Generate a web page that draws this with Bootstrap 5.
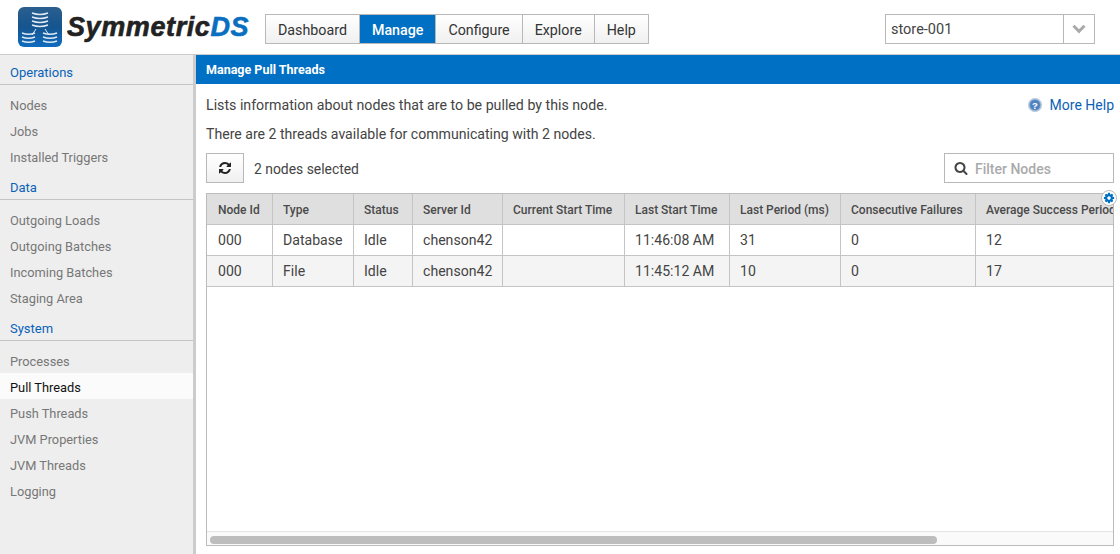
<!DOCTYPE html>
<html lang="en">
<head>
  <meta charset="UTF-8" />
  <meta name="viewport" content="width=device-width, initial-scale=1.0" />
  <title>SymmetricDS</title>
  <link href="https://cdn.jsdelivr.net/npm/bootstrap@5.3.0/dist/css/bootstrap.min.css" rel="stylesheet" />
  <style>
    html, body { height: 100%; overflow: hidden; }
    body { font-family: Roboto, "Liberation Sans", sans-serif; font-size: 14px; color: #444; background: #fff; }

    .sd-head { height: 55px; padding: 7px 25px 0 18px; border-bottom: 1px solid #ccc; flex: none; }
    .sd-logo-text { font-family: "Liberation Sans", Arial, sans-serif; font-weight: 700; font-style: italic; font-size: 27px; line-height: 41px; color: #222; letter-spacing: .6px; -webkit-text-stroke: .6px currentColor; margin-left: 5px; width: 198px; white-space: nowrap; }
    .sd-logo-text span { color: #0a6fc0; }

    .sd-menu { margin: 7px 0 0 0; height: 30px; }
    .sd-menu .btn { font-size: 14.25px; line-height: 28px; padding: 1px 12px 0; border: 1px solid #b8b8b8; border-radius: 0; color: #333; background: linear-gradient(#fff, #f0f0f0); }
    .sd-menu .btn.active { background: #0070c4; color: #fff; font-weight: 500; border-color: #b8b8b8; }

    .sd-store { width: 210px; height: 30px; margin-top: 7px; }
    .sd-store .form-control { font-size: 14.5px; color: #444; border: 1px solid #b8b8b8; border-radius: 0; padding: 1px 5px 0; height: 30px; }
    .sd-store .input-group-text { width: 32px; padding: 0; justify-content: center; background: #fff; border: 1px solid #b8b8b8; border-radius: 0; }

    .sd-side { width: 196px; flex: none; background: #eee; border-right: 3px solid #ccc; box-shadow: inset -1px 0 0 #eee; }
    .sd-section { height: 30px; padding: 9px 0 0 10px; margin-bottom: 7px; line-height: 17px; font-size: 13px; color: #0a62b8; border-bottom: 1px solid #c4c4c4; }
    .sd-item { height: 26px; line-height: 27px; padding: 0 0 0 10px; font-size: 12.8px; color: #777; }
    .sd-item.active { background: #fbfbfb; color: #111; margin-top: -1px; margin-bottom: 1px; line-height: 29px; }

    .sd-main { min-width: 0; }
    .sd-title { height: 29px; line-height: 29px; flex: none; padding-left: 10px; background: #0070c4; color: #fff; font-size: 12.5px; font-weight: 700; }
    .sd-body { padding: 0 6px 8px 10px; min-height: 0; }
    .sd-line { line-height: 20px; font-size: 14.2px; color: #444; }
    .sd-line-b { line-height: 20px; font-size: 14.1px; color: #444; }
    .sd-count { line-height: 20px; font-size: 13.9px; color: #444; margin-left: 10px; padding-top: 2px; }
    .sd-first { margin-top: 11px; }
    .sd-next { margin-top: 9px; }
    .sd-help { color: #0a62b8; font-size: 14px; text-decoration: none; }

    .sd-refresh { width: 38px; height: 30px; padding: 0; border: 1px solid #b8b8b8; border-radius: 0; background: linear-gradient(#fff, #f0f0f0); }
    .sd-filter { width: 170px; height: 30px; }
    .sd-filter .input-group-text { width: 31px; padding: 0 0 0 2px; justify-content: center; background: #fff; border: 1px solid #b8b8b8; border-right: 0; border-radius: 0; }
    .sd-filter .form-control { font-size: 14px; font-weight: 500; padding: 2px 0 0 1px; border: 1px solid #b8b8b8; border-left: 0; border-radius: 0; height: 30px; box-shadow: none; }
    .sd-filter .form-control::placeholder { color: #aaa; }

    .sd-grid { border: 1px solid #bbb; margin-top: 10px; min-height: 0; overflow: hidden; }
    .sd-grid-wrap { min-height: 0; }
    .sd-table { table-layout: fixed; width: 939px; margin: 0; border-collapse: separate; border-spacing: 0; }
    .sd-table th, .sd-table td { height: 31px; padding: 2px 0 0 10px; vertical-align: middle; border: 0; border-right: 1px solid #c4c4c4; border-bottom: 1px solid #c4c4c4; white-space: nowrap; overflow: hidden; box-shadow: none; color: #444; }
    .sd-table th:first-child, .sd-table td:first-child { padding-left: 11px; }
    .sd-table th { background: #dfdfdf; font-size: 12px; font-weight: 500; color: #4a4a4a; }
    .sd-table td { font-size: 14.1px; background: #fff; }
    .sd-table tr.sd-alt td { background: #f4f4f4; }
    .sd-scroll { height: 14px; flex: none; padding: 4px 3px 1px; background: #fafafa; border-top: 1px solid #e4e4e4; }
    .sd-thumb { height: 8px; width: 727px; background: #bdbdbd; border-radius: 4px; }

    .sd-gear { position: absolute; top: 7px; right: -3px; width: 16px; height: 16px; background: #fff; border: 1px solid #bbb; border-radius: 50%; }
  </style>
</head>
<body>
<div class="d-flex flex-column vh-100">

  <div class="sd-head d-flex">
    <svg width="44" height="40" viewBox="0 0 44 40">
      <defs>
        <linearGradient id="logoBg" x1="0" y1="0" x2="0" y2="1">
          <stop offset="0" stop-color="#2b5f8e"/>
          <stop offset=".5" stop-color="#15548f"/>
          <stop offset="1" stop-color="#0f6cc0"/>
        </linearGradient>
      </defs>
      <rect width="44" height="40" rx="6" fill="url(#logoBg)"/>
      <g fill="none" stroke="#dfe9f2" stroke-width="1.6">
        <path d="M14 6q8 3 16 0M14 10q8 3 16 0M14 14q8 3 16 0M14 18q8 3 16 0"/>
        <path d="M4 26q6.500 2.500 13 0M4 30q6.500 2.500 13 0M4 34q6.500 2.500 13 0"/>
        <path d="M25 26q7 2.500 14 0M25 30q7 2.500 14 0M25 34q7 2.500 14 0"/>
        <path d="M18 22l-4 6M27 22l4 6" stroke-width="1"/>
      </g>
    </svg>
    <div class="sd-logo-text">Symmetric<span>DS</span></div>

    <div class="btn-group sd-menu" role="group">
      <button type="button" class="btn">Dashboard</button>
      <button type="button" class="btn active">Manage</button>
      <button type="button" class="btn">Configure</button>
      <button type="button" class="btn">Explore</button>
      <button type="button" class="btn">Help</button>
    </div>

    <div class="input-group sd-store ms-auto">
      <input type="text" class="form-control" value="store-001">
      <span class="input-group-text">
        <svg width="14" height="10" viewBox="0 0 14 10"><path d="M1.500 1.800L7 7.300l5.500-5.500" fill="none" stroke="#aaa" stroke-width="3"/></svg>
      </span>
    </div>
  </div>

  <div class="d-flex flex-grow-1" style="min-height:0">
    <div class="sd-side">
      <div class="sd-section">Operations</div>
      <div class="sd-item">Nodes</div>
      <div class="sd-item">Jobs</div>
      <div class="sd-item">Installed Triggers</div>
      <div class="sd-section">Data</div>
      <div class="sd-item">Outgoing Loads</div>
      <div class="sd-item">Outgoing Batches</div>
      <div class="sd-item">Incoming Batches</div>
      <div class="sd-item">Staging Area</div>
      <div class="sd-section">System</div>
      <div class="sd-item">Processes</div>
      <div class="sd-item active">Pull Threads</div>
      <div class="sd-item">Push Threads</div>
      <div class="sd-item">JVM Properties</div>
      <div class="sd-item">JVM Threads</div>
      <div class="sd-item">Logging</div>
    </div>

    <div class="sd-main flex-grow-1 d-flex flex-column">
      <div class="sd-title">Manage Pull Threads</div>
      <div class="sd-body flex-grow-1 d-flex flex-column">
        <div class="d-flex justify-content-between sd-line sd-first">
          <span>Lists information about nodes that are to be pulled by this node.</span>
          <a href="#" class="sd-help d-flex align-items-center gap-2">
            <svg width="14" height="14" viewBox="0 0 14 14">
              <defs><radialGradient id="helpBg"><stop offset="0" stop-color="#5f8fc8"/><stop offset=".6" stop-color="#4a7fbe"/><stop offset="1" stop-color="#b4c8de"/></radialGradient></defs>
              <circle cx="7" cy="7" r="7" fill="url(#helpBg)"/>
              <circle cx="7" cy="7" r="6.300" fill="none" stroke="#c6d4e4" stroke-width="1"/>
              <text x="7" y="10.500" text-anchor="middle" font-family="Liberation Sans" font-weight="700" font-size="9.500" fill="#fff">?</text>
            </svg>
            More Help
          </a>
        </div>
        <div class="sd-line-b sd-next">There are 2 threads available for communicating with 2 nodes.</div>

        <div class="d-flex align-items-center sd-next">
          <button type="button" class="btn sd-refresh d-flex align-items-center justify-content-center">
            <svg width="14" height="14" viewBox="0 0 1792 1792"><path fill="#222" d="M1639 1056q0 5-1 7-64 268-268 434.5t-478 166.5q-146 0-282.5-55t-243.500-157l-129 129q-19 19-45 19t-45-19-19-45v-448q0-26 19-45t45-19h448q26 0 45 19t19 45-19 45l-137 137q71 66 161 102t187 36q134 0 250-65t186-179q11-17 53-117 8-23 30-23h192q13 0 22.500 9.500t9.500 22.500zm25-800v448q0 26-19 45t-45 19h-448q-26 0-45-19t-19-45 19-45l138-138q-148-137-349-137-134 0-250 65t-186 179q-11 17-53 117-8 23-30 23h-199q-13 0-22.500-9.500t-9.500-22.500v-7q65-268 270-434.500t480-166.500q146 0 284 55.500t245 156.500l130-129q19-19 45-19t45 19 19 45z"/></svg>
          </button>
          <span class="sd-count">2 nodes selected</span>
          <div class="input-group sd-filter ms-auto">
            <span class="input-group-text">
              <svg width="14" height="14" viewBox="0 0 1792 1792"><path fill="#444" d="M1216 832q0-185-131.500-316.500t-316.500-131.500-316.500 131.500-131.500 316.500 131.500 316.500 316.500 131.500 316.500-131.500 131.500-316.500zm512 832q0 52-38 90t-90 38q-54 0-90-38l-343-342q-179 124-399 124-143 0-273.500-55.500t-225-150-150-225-55.500-273.500 55.500-273.500 150-225 225-150 273.500-55.500 273.500 55.500 225 150 150 225 55.500 273.500q0 220-124 399l343 343q37 37 37 90z"/></svg>
            </span>
            <input type="text" class="form-control" placeholder="Filter Nodes">
          </div>
        </div>

        <div class="position-relative flex-grow-1 d-flex flex-column sd-grid-wrap">
          <div class="sd-grid flex-grow-1 d-flex flex-column">
            <div class="flex-grow-1" style="overflow:hidden;min-height:0">
              <table class="table sd-table">
                <colgroup>
                  <col style="width:66px"><col style="width:81px"><col style="width:59px"><col style="width:90px"><col style="width:122px"><col style="width:105px"><col style="width:111px"><col style="width:135px"><col style="width:170px">
                </colgroup>
                <thead>
                  <tr><th>Node Id</th><th>Type</th><th>Status</th><th>Server Id</th><th>Current Start Time</th><th>Last Start Time</th><th>Last Period (ms)</th><th>Consecutive Failures</th><th>Average Success Period (ms)</th></tr>
                </thead>
                <tbody>
                  <tr><td>000</td><td>Database</td><td>Idle</td><td>chenson42</td><td></td><td>11:46:08 AM</td><td>31</td><td>0</td><td>12</td></tr>
                  <tr class="sd-alt"><td>000</td><td>File</td><td>Idle</td><td>chenson42</td><td></td><td>11:45:12 AM</td><td>10</td><td>0</td><td>17</td></tr>
                </tbody>
              </table>
            </div>
            <div class="sd-scroll"><div class="sd-thumb"></div></div>
          </div>
          <div class="sd-gear d-flex align-items-center justify-content-center">
            <svg width="12" height="12" viewBox="0 0 1792 1792"><path fill="#0070c4" d="M1152 896q0-106-75-181t-181-75-181 75-75 181 75 181 181 75 181-75 75-181zm512-109v222q0 12-8 23t-20 13l-185 28q-19 54-39 91 35 50 107 138 10 12 10 25t-9 23q-27 37-99 108t-94 71q-12 0-26-9l-138-108q-44 23-91 38-16 136-29 186-7 28-36 28h-222q-14 0-24.500-8.500t-11.500-21.500l-28-184q-49-16-90-37l-141 107q-10 9-25 9-14 0-25-11-126-114-165-168-7-10-7-23 0-12 8-23 15-21 51-66.500t54-70.500q-27-50-41-99l-183-27q-13-2-21-12.500t-8-23.500v-222q0-12 8-23t19-13l186-28q14-46 39-92-40-57-107-138-10-12-10-24 0-10 9-23 26-36 98.500-107.500t94.500-71.500q13 0 26 10l138 107q44-23 91-38 16-136 29-186 7-28 36-28h222q14 0 24.500 8.500t11.500 21.500l28 184q49 16 90 37l142-107q9-9 24-9 13 0 25 10 129 119 165 170 7 8 7 22 0 12-8 23-15 21-51 66.500t-54 70.500q26 50 41 98l183 28q13 2 21 12.500t8 23.500z"/></svg>
          </div>
        </div>
      </div>
    </div>
  </div>
</div>
<script src="https://cdn.jsdelivr.net/npm/bootstrap@5.3.0/dist/js/bootstrap.bundle.min.js"></script>
</body>
</html>
